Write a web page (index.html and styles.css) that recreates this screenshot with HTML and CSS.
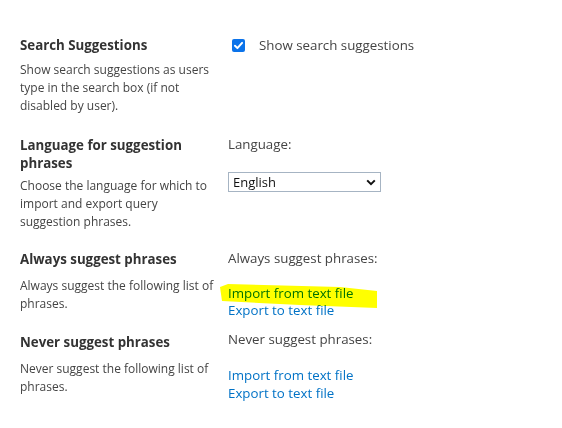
FILE: index.html
```html
<!DOCTYPE html>
<html lang="en">
<head>
<meta charset="utf-8">
<title>Query Suggestion Settings</title>
<link rel="stylesheet" href="styles.css">
</head>
<body>
<div class="page">
  <section class="row row-1">
    <div class="left">
      <h3 class="title">Search Suggestions</h3>
      <p class="desc">Show search suggestions as users type in the search box (if not disabled by user).</p>
    </div>
    <div class="right">
      <label class="check">
        <span class="box"><svg width="13" height="13" viewBox="0 0 13 13"><rect x="0" y="0" width="13" height="13" rx="2" fill="#0b73ea"/><path d="M3 6.8 L5.4 9.1 L10.1 3.9" stroke="#fff" stroke-width="2" fill="none" stroke-linecap="round" stroke-linejoin="round"/></svg></span>
        <span>Show search suggestions</span>
      </label>
    </div>
  </section>

  <section class="row row-2">
    <div class="left">
      <h3 class="title">Language for suggestion phrases</h3>
      <p class="desc">Choose the language for which to import and export query suggestion phrases.</p>
    </div>
    <div class="right">
      <div class="label">Language:</div>
      <div class="select">
        <span>English</span>
        <svg width="10" height="7" viewBox="0 0 10 7"><path d="M1.2 1.4 L5 5.2 L8.8 1.4" stroke="#111" stroke-width="2" fill="none"/></svg>
      </div>
    </div>
  </section>

  <section class="row row-3">
    <div class="left">
      <h3 class="title">Always suggest phrases</h3>
      <p class="desc desc-lg">Always suggest the following list of phrases.</p>
    </div>
    <div class="right">
      <div class="label">Always suggest phrases:</div>
      <div class="links">
        <a class="link" href="#">Import from text file</a>
        <a class="link" href="#">Export to text file</a>
      </div>
      <svg class="marker" width="160" height="28" viewBox="0 0 160 28"><polygon points="0,5 8,2 120,5 157,9 157,26 80,23 2,19" fill="#ffff00"/></svg>
    </div>
  </section>

  <section class="row row-4">
    <div class="left">
      <h3 class="title">Never suggest phrases</h3>
      <p class="desc desc-lg">Never suggest the following list of phrases.</p>
    </div>
    <div class="right">
      <div class="label">Never suggest phrases:</div>
      <div class="links">
        <a class="link" href="#">Import from text file</a>
        <a class="link" href="#">Export to text file</a>
      </div>
    </div>
  </section>
</div>
</body>
</html>
```

FILE: styles.css
```css
html, body {
  margin: 0;
  padding: 0;
  background: #ffffff;
}

body {
  font-family: "Open Sans", "Noto Sans", sans-serif;
  color: #444444;
}

.page {
  padding: 36px 0 0 20px;
}

.row {
  display: grid;
  grid-template-columns: 208px 1fr;
  align-items: start;
}

.row-1 { margin-bottom: 21px; }
.row-2 { margin-bottom: 19px; }
.row-3 { margin-bottom: 14px; }

.left {
  display: flex;
  flex-direction: column;
}

.title {
  margin: 0;
  font-size: 13.3px;
  line-height: 18px;
  font-weight: 700;
  color: #333333;
  width: 190px;
}

.desc {
  margin: 7px 0 0 0;
  font-size: 12px;
  line-height: 18px;
  color: #444444;
  width: 198px;
}

.row-2 .desc { margin-top: 5px; }
.desc-lg { margin-top: 9px; }

.right {
  position: relative;
  display: flex;
  flex-direction: column;
  font-size: 13.3px;
  line-height: 18px;
  color: #444444;
}

.row-2 .right,
.row-3 .right { margin-top: -1px; }
.row-4 .right { margin-top: -3px; }

.check {
  display: flex;
  align-items: center;
  gap: 14px;
  padding-left: 4px;
}

.box {
  display: flex;
  width: 13px;
  height: 13px;
}

.select {
  margin-top: 19px;
  width: 153px;
  height: 20px;
  box-sizing: border-box;
  border: 1px solid #a6b4c3;
  display: flex;
  align-items: center;
  justify-content: space-between;
  padding: 0 4px 0 4px;
  color: #111111;
  font-size: 13px;
}

.links {
  margin-top: 18px;
  display: flex;
  flex-direction: column;
}

.row-3 .links { line-height: 17px; }

.link {
  color: #0072c6;
  text-decoration: none;
}

.marker {
  position: absolute;
  left: -8px;
  top: 33px;
  mix-blend-mode: multiply;
  pointer-events: none;
}
```
